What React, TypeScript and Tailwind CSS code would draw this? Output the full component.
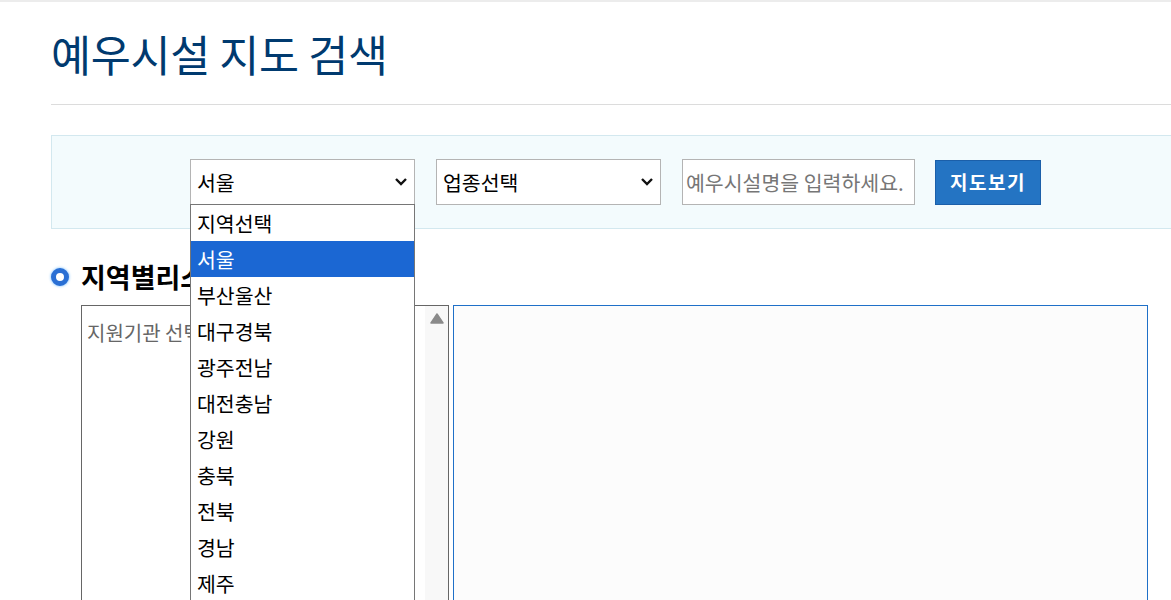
import React from "react";

const regions = ["지역선택", "서울", "부산울산", "대구경북", "광주전남", "대전충남", "강원", "충북", "전북", "경남", "제주"];

function Chevron() {
  return (
    <svg width="14" height="10" viewBox="0 0 14 10" className="shrink-0">
      <polyline points="2,2 7,7 12,2" fill="none" stroke="#111" strokeWidth="2.4" />
    </svg>
  );
}

function App() {
  return (
    <div
      className="min-h-screen w-full overflow-hidden bg-white border-t-2 border-[#ececec]"
      style={{ fontFamily: '"Noto Sans CJK KR", "Noto Sans", sans-serif' }}
    >
      <div className="ml-[51px] w-[1128px]">
        <h1 className="pt-[22px] h-[102px] text-[43.5px] leading-[60px] text-[#003a6f] tracking-[-0.3px]">
          예우시설 지도 검색
        </h1>
        <div className="border-t border-[#dcdcdc]" />

        {/* search bar */}
        <div className="mt-[30px] h-[94px] border border-[#d3e8ef] bg-[#f3fbfd] flex items-center pl-[138px]">
          <div className="relative">
            <div className="w-[225px] h-[46px] border border-[#b4b4b4] bg-white flex items-center justify-between pl-[6px] pr-[6px]">
              <span className="text-[20.5px] text-black">서울</span>
              <Chevron />
            </div>
            <ul className="absolute left-0 top-[45px] z-10 w-[225px] border border-[#767676] bg-white">
              {regions.map((r) => (
                <li
                  key={r}
                  className={
                    r === "서울"
                      ? "h-[36px] leading-[36px] pl-[6px] text-[20.5px] bg-[#1b67d3] text-white"
                      : "h-[36px] leading-[36px] pl-[6px] text-[20.5px] text-black"
                  }
                >
                  {r}
                </li>
              ))}
            </ul>
          </div>
          <div className="ml-[21px] w-[225px] h-[46px] border border-[#b4b4b4] bg-white flex items-center justify-between pl-[6px] pr-[6px]">
            <span className="text-[20.5px] text-black">업종선택</span>
            <Chevron />
          </div>
          <input
            className="ml-[21px] w-[233px] h-[46px] border border-[#b4b4b4] bg-white px-[3px] text-[20.5px] outline-none placeholder:text-[#767676]"
            placeholder="예우시설명을 입력하세요."
          />
          <button className="ml-[20px] w-[106px] h-[45px] bg-[#2474c3] border border-[#1b5fa9] text-white text-[19px] font-bold tracking-[1.5px]">
            지도보기
          </button>
        </div>

        {/* region list section */}
        <div className="mt-[29px] flex items-center gap-[12px] h-[38px]">
          <span className="w-[18px] h-[18px] rounded-full border-[5px] border-[#2a6fd4] bg-white shadow-[0_0_3px_#63b4ff]" />
          <h2 className="text-[27px] font-bold text-black leading-[38px]">지역별리스트</h2>
        </div>

        <div className="mt-[9px] ml-[30px] flex gap-[4px]">
          <div className="w-[368px] h-[320px] border border-[#666] flex">
            <div className="flex-1 pl-[5px] pt-[13px] text-[20px] text-[#666] leading-[28px] whitespace-nowrap overflow-hidden">지원기관 선택</div>
            <div className="w-[23px] bg-[#f8f8f8] flex justify-center pt-[7px]">
              <svg width="14" height="11" viewBox="0 0 14 11">
                <path d="M7 1 L13 10 L1 10 Z" fill="#8a8a8a" stroke="#8a8a8a" strokeLinejoin="round" strokeWidth="1.5" />
              </svg>
            </div>
          </div>
          <div className="w-[695px] h-[320px] border-[1.5px] border-[#1f70c8] bg-[#fcfcfc]" />
        </div>
      </div>
    </div>
  );
}

export default App;
